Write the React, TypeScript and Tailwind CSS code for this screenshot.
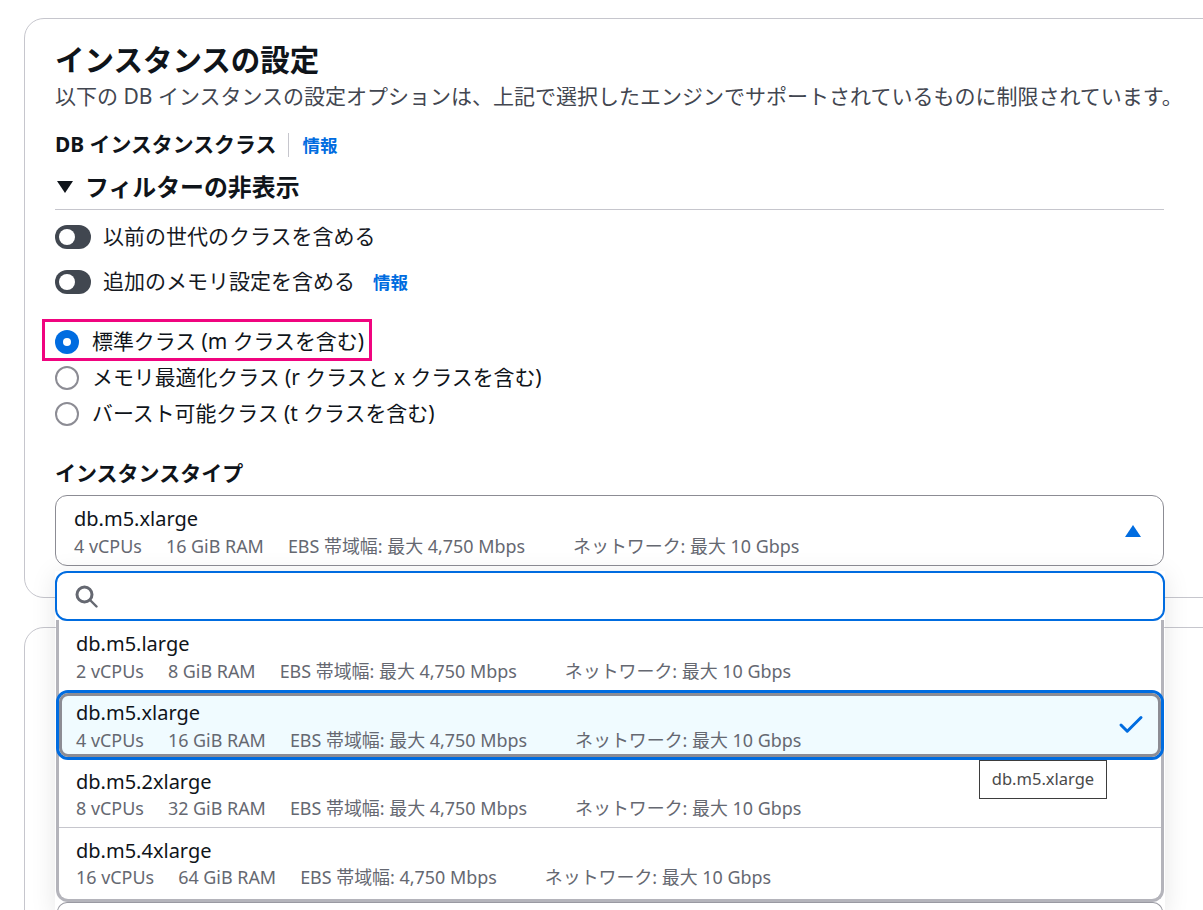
import { Check } from "lucide-react";

const options = [
  { name: "db.m5.large", cpu: "2 vCPUs", ram: "8 GiB RAM", ebs: "EBS 帯域幅: 最大 4,750 Mbps", net: "ネットワーク: 最大 10 Gbps" },
  { name: "db.m5.xlarge", cpu: "4 vCPUs", ram: "16 GiB RAM", ebs: "EBS 帯域幅: 最大 4,750 Mbps", net: "ネットワーク: 最大 10 Gbps", selected: true },
  { name: "db.m5.2xlarge", cpu: "8 vCPUs", ram: "32 GiB RAM", ebs: "EBS 帯域幅: 最大 4,750 Mbps", net: "ネットワーク: 最大 10 Gbps" },
  { name: "db.m5.4xlarge", cpu: "16 vCPUs", ram: "64 GiB RAM", ebs: "EBS 帯域幅: 4,750 Mbps", net: "ネットワーク: 最大 10 Gbps" },
];

function Specs({ o }: { o: (typeof options)[number] }) {
  return (
    <div className="flex text-[17.93px] leading-[26px] text-[#656871]">
      <span className="mr-[24px]">{o.cpu}</span>
      <span className="mr-[24px]">{o.ram}</span>
      <span className="mr-[48px]">{o.ebs}</span>
      <span>{o.net}</span>
    </div>
  );
}

function Toggle() {
  return (
    <span className="flex h-[24px] w-[36px] items-center rounded-full bg-[#414750] pl-[4px]">
      <span className="h-[16px] w-[16px] rounded-full bg-white" />
    </span>
  );
}

function Radio({ on, label }: { on?: boolean; label: string }) {
  return (
    <div className="flex h-[36px] items-center gap-[13px]">
      {on ? (
        <span className="flex h-[24px] w-[24px] items-center justify-center rounded-full bg-[#006ce0]">
          <span className="h-[8px] w-[8px] rounded-full bg-white" />
        </span>
      ) : (
        <span className="h-[24px] w-[24px] rounded-full border-2 border-[#8c8c94] bg-white" />
      )}
      <span className="text-[20.9px] text-[#0f141a]">{label}</span>
    </div>
  );
}

export default function App() {
  return (
    <div
      className="relative h-[910px] w-[1203px] overflow-hidden bg-white pl-[24px] pt-[18px] text-[#0f141a]"
      style={{ fontFamily: '"Noto Sans", "Noto Sans CJK JP", sans-serif' }}
    >
      <div className="h-[580px] w-[1220px] rounded-[20px] border border-[#c6c6cd] pl-[30px] pt-[22px]">
        <h1 className="text-[29.5px] font-bold leading-[38px]">インスタンスの設定</h1>
        <p className="whitespace-nowrap text-[21px] leading-[34px] text-[#424650]">
          以下の DB インスタンスの設定オプションは、上記で選択したエンジンでサポートされているものに制限されています。
        </p>
        <div className="mt-[20px] flex h-[24px] items-center">
          <span className="text-[20.9px] font-bold">DB インスタンスクラス</span>
          <span className="ml-[12px] mr-[13px] h-[24px] w-px bg-[#c6c6cd]" />
          <span className="text-[17.5px] font-bold text-[#006ce0]">情報</span>
        </div>
        <div className="mt-[14px] flex h-[39px] w-[1109px] items-center gap-[12px] border-b border-[#c6c6cd] pb-[6px] pl-[2px]">
          <span className="h-0 w-0 border-x-[8px] border-t-[12px] border-x-transparent border-t-[#0f141a]" />
          <span className="text-[23.9px] font-bold">フィルターの非表示</span>
        </div>
        <div className="mt-[15px] flex h-[24px] items-center gap-[12px]">
          <Toggle />
          <span className="text-[21px] text-[#16191f]">以前の世代のクラスを含める</span>
        </div>
        <div className="mt-[21px] flex h-[24px] items-center gap-[12px]">
          <Toggle />
          <span className="text-[21px] text-[#16191f]">追加のメモリ設定を含める</span>
          <span className="ml-[6px] text-[17.5px] font-bold text-[#006ce0]">情報</span>
        </div>
        <div className="mt-[30px]">
          <Radio on label="標準クラス (m クラスを含む)" />
          <Radio label="メモリ最適化クラス (r クラスと x クラスを含む)" />
          <Radio label="バースト可能クラス (t クラスを含む)" />
        </div>
        <div className="mt-[27px] text-[21px] font-bold leading-[28px]">インスタンスタイプ</div>
        <div className="mt-[8px] flex h-[71px] w-[1109px] items-center justify-between rounded-[12px] border border-[#8c8c94] pl-[18px] pr-[22px]">
          <div className="pt-[2px]">
            <div className="text-[20px] leading-[28px]">db.m5.xlarge</div>
            <Specs o={options[1]} />
          </div>
          <span className="h-0 w-0 border-x-[8px] border-b-[12px] border-x-transparent border-b-[#006ce0]" />
        </div>
      </div>
      <div className="mt-[29px] h-[400px] w-[1220px] rounded-[20px] border border-[#c6c6cd]" />

      {/* open dropdown */}
      <div className="absolute left-[55px] top-[571px] w-[1110px] shadow-[0_4px_24px_rgba(0,7,22,0.10)]">
        <div className="relative z-10 flex h-[50px] items-center rounded-[12px] border-2 border-[#006ce0] bg-white pl-[18px]">
          <svg width="23" height="23" viewBox="0 0 23 23" fill="none" stroke="#656871" strokeWidth="3">
            <circle cx="9.5" cy="9.5" r="7.5" />
            <path d="M15 15l6.5 6.5" strokeLinecap="round" strokeWidth="2.4" />
          </svg>
        </div>
        <div className="-mt-px ml-px mr-[1px] rounded-b-[12px] border-x-[3px] border-b-[3px] border-[#b4b4bb] bg-white">
          <div className="h-[70px] pl-[17px] pt-[10px]">
            <div className="text-[20px] leading-[28px]">{options[0].name}</div>
            <Specs o={options[0]} />
          </div>
          <div className="relative z-10 -mx-[3px] flex h-[70px] items-center justify-between rounded-[12px] border-[3px] border-[#006ce0] bg-[#f0fbff] pl-[17px] pr-[15px] pt-[2px] outline-[3px] -outline-offset-[6px] outline-[#8c8c94]">
            <div>
              <div className="text-[20px] leading-[28px]">{options[1].name}</div>
              <Specs o={options[1]} />
            </div>
            <Check size={30} strokeWidth={2.4} className="-mt-[2px] text-[#006ce0]" />
          </div>
          <div className="h-[68px] border-b border-[#c6c6cd] pl-[17px] pt-[8px]">
            <div className="text-[20px] leading-[27px]">{options[2].name}</div>
            <Specs o={options[2]} />
          </div>
          <div className="h-[71px] pl-[17px] pt-[9px]">
            <div className="text-[20px] leading-[27px]">{options[3].name}</div>
            <Specs o={options[3]} />
          </div>
        </div>
        <div className="mx-[2px] h-[10px] rounded-t-[12px] border border-b-0 border-[#9a9aa2]" />
      </div>

      {/* radio highlight annotation */}
      <div className="absolute left-[42px] top-[319px] h-[42px] w-[330px] border-[3px] border-[#f0047f]" />

      {/* native title tooltip */}
      <div className="absolute left-[979px] top-[760px] flex h-[39px] w-[128px] items-center justify-center border border-[#3d3d3d] bg-white text-[16.5px] text-[#4a4a4a]">
        db.m5.xlarge
      </div>
    </div>
  );
}
